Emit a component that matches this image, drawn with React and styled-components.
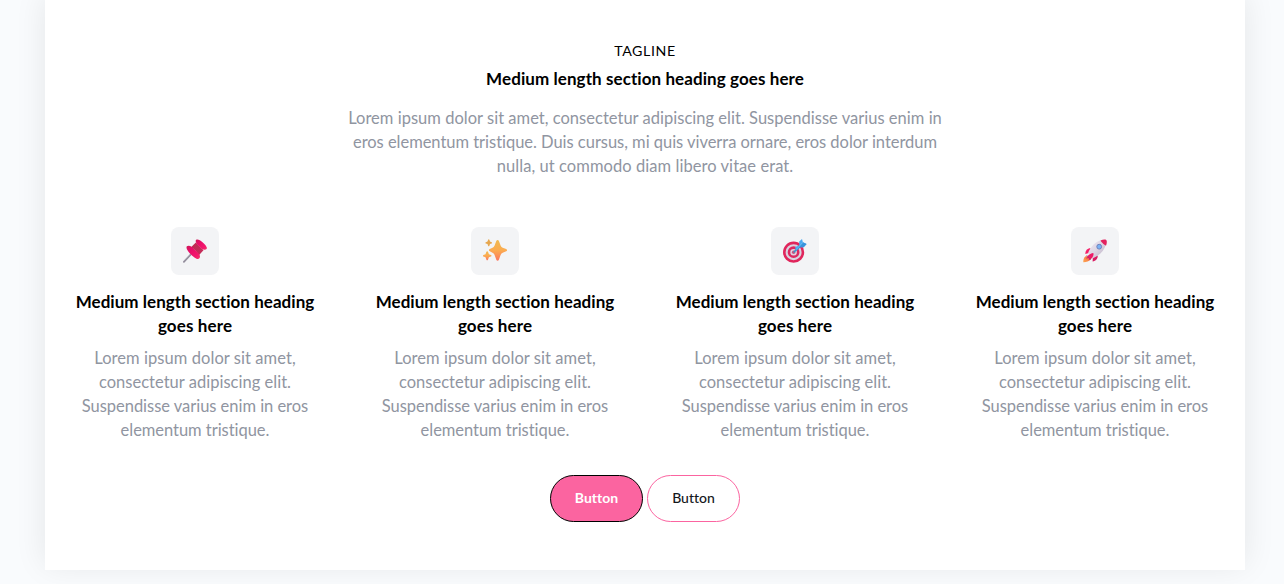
import React from "react";
import styled, { createGlobalStyle } from "styled-components";

const GlobalStyle = createGlobalStyle`
  *, *::before, *::after { box-sizing: border-box; }
  body {
    margin: 0;
    background: #f9fbfd;
    font-family: Lato, "Liberation Sans", sans-serif;
    color: #000;
    overflow: hidden;
  }
  h2, h3, p { margin: 0; }
`;

const Page = styled.main`
  height: 584px;
  padding: 0 39px 14px 45px;
`;

const Card = styled.section`
  display: flex;
  flex-direction: column;
  align-items: center;
  height: 570px;
  padding-top: 39px;
  background: #fff;
  box-shadow: 0 -5px 30px rgba(0, 0, 0, 0.085);
  text-align: center;
`;

const Tagline = styled.p`
  margin-bottom: 4px;
  font-size: 14.2px;
  line-height: 24px;
  letter-spacing: 0.62px;
`;

const Heading = styled.h2`
  margin-bottom: 15px;
  font-size: 17px;
  font-weight: 700;
  line-height: 24px;
`;

const FeatureHeading = styled.h3`
  margin: 15px 0 8px;
  font-size: 17px;
  font-weight: 700;
  line-height: 24px;
`;

const Body = styled.p`
  color: #9095a1;
  font-size: 16.5px;
  line-height: 24px;
`;

const Line = styled.span`
  display: block;
  white-space: nowrap;
  letter-spacing: ${({ $spacing }) => $spacing || 0}px;
  font-variant-ligatures: none;
`;

const Features = styled.div`
  display: grid;
  grid-template-columns: repeat(4, 300px);
  margin: 49px 0 33px;
`;

const Feature = styled.article`
  display: flex;
  flex-direction: column;
  align-items: center;
`;

const IconTile = styled.div`
  display: grid;
  place-items: center;
  width: 48px;
  height: 48px;
  border-radius: 8px;
  background: #f3f4f6;
`;

const Actions = styled.div`
  display: flex;
  gap: 4px;
`;

const Button = styled.button`
  width: 93px;
  height: 47px;
  padding: 0 0 2px;
  border: 1px solid ${({ $primary }) => ($primary ? "#000" : "#fb64a0")};
  border-radius: 24px;
  background: ${({ $primary }) => ($primary ? "#fb64a0" : "#fff")};
  color: ${({ $primary }) => ($primary ? "#fff" : "#15171c")};
  font-family: inherit;
  font-size: 14px;
  font-weight: ${({ $primary }) => ($primary ? 700 : 500)};
  letter-spacing: 0;
  font-variant-ligatures: none;
`;

const Glyph = styled.svg`
  display: block;
  width: 24px;
  height: 24px;
`;

const Pin = () => (
  <Glyph viewBox="0 0 24 24">
    <defs>
      <linearGradient id="pinHead" x1="0" y1="0" x2="1" y2="1">
        <stop offset="0" stopColor="#cc1a58" />
        <stop offset="0.3" stopColor="#e80d68" />
        <stop offset="0.75" stopColor="#f3186c" />
        <stop offset="1" stopColor="#f23b67" />
      </linearGradient>
      <linearGradient id="pinNeck" x1="0" y1="0" x2="1" y2="1">
        <stop offset="0" stopColor="#b92c50" />
        <stop offset="1" stopColor="#c92d5c" />
      </linearGradient>
    </defs>
    <path d="M9 14.2 .9 22.9" stroke="#918b9a" strokeWidth="1.7" strokeLinecap="round" />
    <path d="M8.6 14 1.3 21.5" stroke="#b3aeba" strokeWidth="0.5" strokeLinecap="round" />
    <path d="m12.8 3.5 7.7 7.8-4.8 5.2c-1.4-3.3-4.6-6.7-7.7-8.3Z" fill="url(#pinNeck)" />
    <path d="M3.9 7.3c1.1-1.1 3.2-.6 5 .7l6.7 6.4c1.5 1.7 1.8 3.6.8 4.9-1 1.2-2.6.8-4.6-.6-2.9-2-5.8-4.8-7.3-7.4-.9-1.5-1.4-3.2-.6-4Z" fill="url(#pinHead)" />
    <path d="M13.2.8c1.3-1 4 .3 6.6 2.6 2.6 2.5 4.6 4.8 4 6.2-.7 1.6-3.3 1.6-5.3-.2l-4.4-4.2c-1.3-1.5-1.9-3.6-.9-4.4Z" fill="url(#pinHead)" />
  </Glyph>
);

const Sparkles = () => (
  <Glyph viewBox="0 0 24 24">
    <defs>
      <linearGradient id="spark" x1="0" y1="0" x2="0" y2="1">
        <stop offset="0" stopColor="#f0b951" />
        <stop offset="0.5" stopColor="#fbab50" />
        <stop offset="1" stopColor="#fb7660" />
      </linearGradient>
    </defs>
    <path d="M13.3 2.1c.5-1.4 2.1-1.4 2.6 0l1.8 4.6c.4 1 1.1 1.6 2 2l3.5 1.4c1.1.5 1.1 1.8 0 2.2l-3.5 1.5c-.9.4-1.6 1-2 2l-1.8 4.9c-.5 1.4-2.1 1.4-2.6 0l-1.8-4.9c-.4-1-1.1-1.6-2-2L6.8 12.3c-1.2-.4-1.2-1.7 0-2.2l2.7-1.4c.9-.4 1.6-1 2-2Z" fill="url(#spark)" />
    <path d="M5.1.8c.3-.8 1-.8 1.3 0l.6 1.7 1.6.7c.7.3.7 1 0 1.3L7 5.1l-.6 1.7c-.3.7-1 .7-1.3 0l-.6-1.7-1.6-.6c-.7-.3-.7-1 0-1.3l1.6-.7Z" fill="#e6a64e" />
    <path d="M3.4 12.8c.3-.9 1.3-.9 1.6 0l.9 2.4 2 .8c.8.4.8 1.2 0 1.5l-2 .8-.9 2.4c-.3.9-1.3.9-1.6 0l-.9-2.4-2-.8c-.8-.3-.8-1.1 0-1.5l2-.8Z" fill="url(#spark)" />
  </Glyph>
);

const Target = () => (
  <Glyph viewBox="0 0 24 24">
    <circle cx="10.6" cy="13.2" r="9.3" fill="#d9d3e0" stroke="#e0265c" strokeWidth="2.6" />
    <circle cx="10.6" cy="13.2" r="4.6" fill="#dfd3e0" stroke="#dc2860" strokeWidth="2.6" />
    <circle cx="10.6" cy="13.2" r="1.7" fill="#c7547f" />
    <path d="m11.2 12.9 7.3-7.5" stroke="#3a93c9" strokeWidth="1.6" strokeLinecap="round" />
    <path d="m12.1 8.2 4.1-2V2.6L19 .1l.9 3.2L23.6 5l-2.9 3.2h-3.3L13.1 12Z" fill="#4aa9f0" />
    <path d="m13.1 12 4.3-3.8h3.3L23.6 5l-3.7-1.7-5.8 5.8Z" fill="#3994dc" />
    <path d="m13.3 10.5 6.6-7.2" stroke="#78c9f7" strokeWidth="0.8" />
  </Glyph>
);

const Rocket = () => (
  <Glyph viewBox="0 0 24 24">
    <defs>
      <linearGradient id="hull" x1="0" y1="0" x2="1" y2="1">
        <stop offset="0" stopColor="#f0eaf3" />
        <stop offset="0.5" stopColor="#ddd5e3" />
        <stop offset="1" stopColor="#b9adc1" />
      </linearGradient>
      <linearGradient id="flame" x1="1" y1="0" x2="0" y2="1">
        <stop offset="0" stopColor="#ee6c45" />
        <stop offset="1" stopColor="#ffa550" />
      </linearGradient>
    </defs>
    <path d="M3.4 17.1C1 17.7.2 20.9.3 23.2c2.4.1 6-.6 6.9-3Z" fill="url(#flame)" />
    <path d="M7.7 9.3c-3.6-.1-5.2 2.2-5.4 5.7l3.6-.9Z" fill="#f41f68" />
    <path d="M14.7 16.4c.2 3.5-1.9 5.3-5.1 6l.3-4.3Z" fill="#d81a61" />
    <path d="M18.2 1.2C13.1 2.2 7.4 7.4 5 14.2l5 5c6.8-2.6 11.6-8.3 12.9-13.6Z" fill="url(#hull)" />
    <path d="M17.5 1.4C19.7.4 22.3.2 23.2.9c.9.8.8 3.6-.1 5.6-1-.1-5-3.4-5.6-5.1Z" fill="#e3215f" />
    <path d="M10.3 13.9c-2.7.1-5.8 2.4-7.1 5.8l2.4-.8.4 2.5c2.9-1.4 5.3-4.9 4.3-7.5Z" fill="#ee1b67" />
    <path d="M3.4 16.1 8 20.7" stroke="#9b3c60" strokeWidth="0.8" />
    <circle cx="16.2" cy="7.7" r="2.4" fill="#79b2f5" stroke="#6a7ab6" strokeWidth="0.9" />
  </Glyph>
);

const features = [
  { name: "pin", Icon: Pin },
  { name: "sparkles", Icon: Sparkles },
  { name: "target", Icon: Target },
  { name: "rocket", Icon: Rocket },
];

export default function App() {
  return (
    <>
      <GlobalStyle />
      <Page>
        <Card>
          <Tagline>TAGLINE</Tagline>
          <Heading>
            <Line $spacing={0.08}>Medium length section heading goes here</Line>
          </Heading>
          <Body>
            <Line $spacing={0.02}>
              Lorem ipsum dolor sit amet, consectetur adipiscing elit. Suspendisse varius enim in
            </Line>
            <Line $spacing={-0.03}>
              eros elementum tristique. Duis cursus, mi quis viverra ornare, eros dolor interdum
            </Line>
            <Line $spacing={0.06}>nulla, ut commodo diam libero vitae erat.</Line>
          </Body>
          <Features>
            {features.map(({ name, Icon }) => (
              <Feature key={name}>
                <IconTile>
                  <Icon />
                </IconTile>
                <FeatureHeading>
                  <Line $spacing={0.04}>Medium length section heading</Line>
                  <Line $spacing={0.12}>goes here</Line>
                </FeatureHeading>
                <Body>
                  <Line $spacing={0.06}>Lorem ipsum dolor sit amet,</Line>
                  <Line $spacing={0.02}>consectetur adipiscing elit.</Line>
                  <Line $spacing={-0.03}>Suspendisse varius enim in eros</Line>
                  <Line $spacing={-0.04}>elementum tristique.</Line>
                </Body>
              </Feature>
            ))}
          </Features>
          <Actions>
            <Button $primary>Button</Button>
            <Button>Button</Button>
          </Actions>
        </Card>
      </Page>
    </>
  );
}
